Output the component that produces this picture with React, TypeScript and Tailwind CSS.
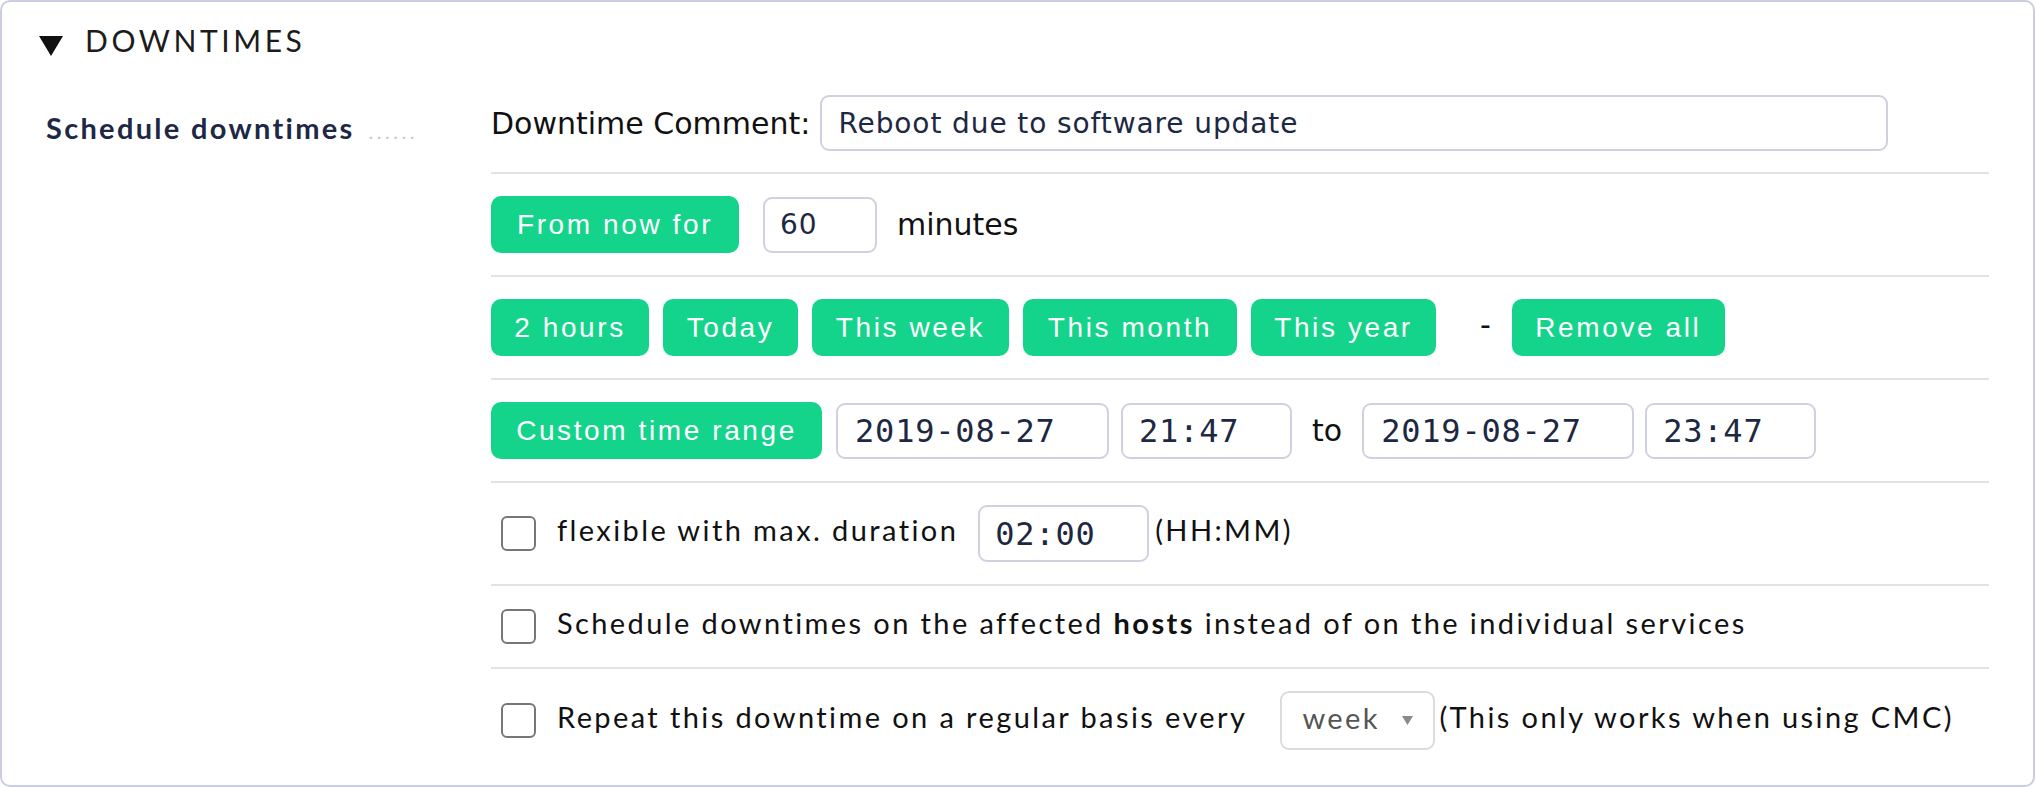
const btn =
  "h-[57px] rounded-[10px] bg-[#14d48b] text-white font-['Liberation_Sans',Arial,sans-serif] text-[28px] tracking-[2.6px] flex items-center justify-center shrink-0";
const field =
  "h-[56px] rounded-[9px] border-2 border-[#cfd1e1] bg-white text-[#1d2842] outline-none shrink-0";
const mono = "font-['DejaVu_Sans_Mono',monospace] text-[32px] tracking-[0.8px]";
const sans = "font-['DejaVu_Sans',sans-serif] text-[28px] tracking-[0.9px]";
const lato = "font-['Lato',sans-serif] text-[29px] tracking-[2.4px] text-[#111] pb-[8px]";
const dejavu = "font-['DejaVu_Sans',sans-serif] text-[30px] text-[#111]";
const row = "flex items-center py-[22px] border-b-2 border-[#e3e3e3]";

function Checkbox() {
  return (
    <span className="ml-[10px] mr-[21px] h-[35px] w-[35px] shrink-0 rounded-[6px] border-2 border-[#777] bg-white" />
  );
}

export default function App() {
  return (
    <div className="h-[787px] w-[2036px] bg-white">
      <div className="h-[787px] w-[2035px] rounded-[10px] border-2 border-[#cbcee0] bg-white">
        {/* header */}
        <div className="flex h-[72px] items-start pl-[37px] pt-[20px]">
          <svg width="24" height="20" viewBox="0 0 24 20" className="mt-[14px]">
            <polygon points="0,0 24,0 12,20" fill="#111" />
          </svg>
          <span className="ml-[22px] font-['Lato',sans-serif] text-[30px] leading-[36px] tracking-[3.6px] text-[#1c1c1c]">
            DOWNTIMES
          </span>
        </div>

        <div className="flex">
          {/* left label */}
          <div className="w-[489px] shrink-0 pl-[44px] pt-[37px]">
            <span className="font-['Lato',sans-serif] text-[29px] font-bold leading-[34px] tracking-[2.3px] text-[#1e2846]">
              Schedule downtimes
            </span>
            <span className="ml-[14px] font-['Lato',sans-serif] text-[20px] tracking-[3.5px] text-[#c9c9c9]">
              ......
            </span>
          </div>

          {/* form rows */}
          <div className="w-[1498px]">
            <div className={`${row} h-[100px] py-0`}>
              <span className={dejavu}>Downtime Comment:</span>
              <input
                defaultValue="Reboot due to software update"
                className={`${field} ${sans} ml-[10px] h-[54px] w-[1068px] px-[16px]`}
              />
            </div>

            <div className={row}>
              <span className={`${btn} w-[248px]`}>From now for</span>
              <input defaultValue="60" className={`${field} ${sans} ml-[24px] w-[114px] px-[15px]`} />
              <span className={`${dejavu} ml-[20px]`}>minutes</span>
            </div>

            <div className={`${row} gap-[14px]`}>
              <span className={`${btn} w-[158px]`}>2 hours</span>
              <span className={`${btn} w-[135px]`}>Today</span>
              <span className={`${btn} w-[197px]`}>This week</span>
              <span className={`${btn} w-[214px]`}>This month</span>
              <span className={`${btn} w-[185px]`}>This year</span>
              <span className={`${dejavu} ml-[30px] mr-[7px] pb-[6px]`}>-</span>
              <span className={`${btn} w-[213px]`}>Remove all</span>
            </div>

            <div className={row}>
              <span className={`${btn} w-[331px]`}>Custom time range</span>
              <input defaultValue="2019-08-27" className={`${field} ${mono} ml-[14px] w-[273px] px-[17px]`} />
              <input defaultValue="21:47" className={`${field} ${mono} ml-[12px] w-[171px] px-[16px]`} />
              <span className={`${dejavu} mx-[20px]`}>to</span>
              <input defaultValue="2019-08-27" className={`${field} ${mono} w-[272px] px-[17px]`} />
              <input defaultValue="23:47" className={`${field} ${mono} ml-[11px] w-[171px] px-[16px]`} />
            </div>

            <div className={row}>
              <Checkbox />
              <span className={lato}>flexible with max. duration</span>
              <input defaultValue="02:00" className={`${field} ${mono} ml-[20px] h-[57px] w-[171px] px-[15px]`} />
              <span className={`${lato} ml-[6px]`}>(HH:MM)</span>
            </div>

            <div className={`${row} h-[83px] py-0`}>
              <Checkbox />
              <span className={lato}>
                Schedule downtimes on the affected <b className="font-bold">hosts</b> instead of on the individual services
              </span>
            </div>

            <div className="flex items-center py-[22px]">
              <Checkbox />
              <span className={lato}>Repeat this downtime on a regular basis every</span>
              <span className="ml-[33px] flex h-[59px] w-[155px] shrink-0 items-center rounded-[9px] border-2 border-[#dcdcdc] pl-[20px]">
                <span className="font-['Lato',sans-serif] text-[29px] tracking-[2.4px] text-[#555] pb-[6px]">week</span>
                <svg width="11" height="9" viewBox="0 0 11 9" className="ml-[22px]">
                  <polygon points="0,0 11,0 5.5,9" fill="#8a8a8a" />
                </svg>
              </span>
              <span className={`${lato} ml-[4px]`}>(This only works when using CMC)</span>
            </div>
          </div>
        </div>
      </div>
    </div>
  );
}
